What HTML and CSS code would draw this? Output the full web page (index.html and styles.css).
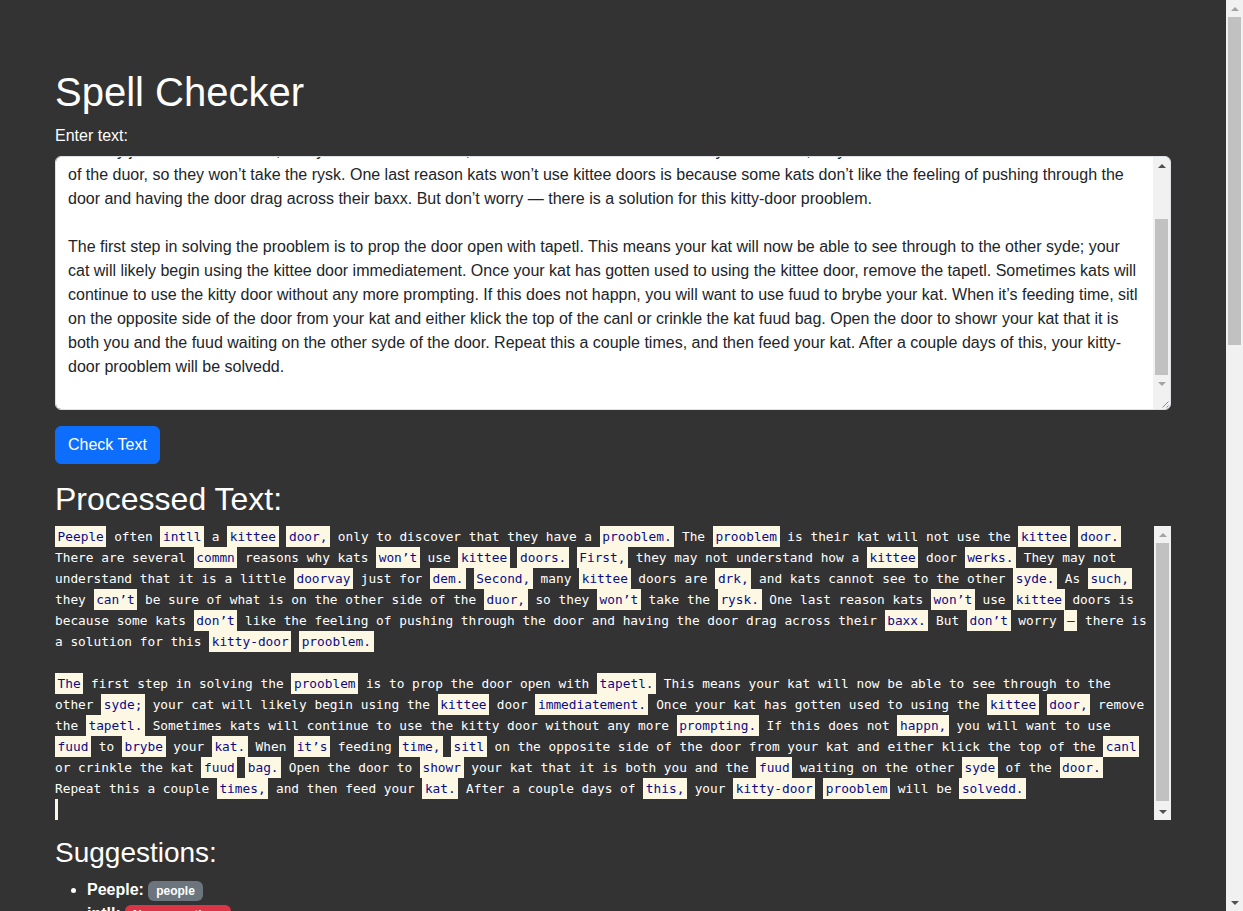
FILE: index.html
```html
<!DOCTYPE html>
<html lang="en">
<head>
<meta charset="utf-8">
<title>Spell Checker</title>
<link rel="stylesheet" href="styles.css">
<script src="script.js" defer></script>
</head>
<body>
<div class="container">
  <h1 class="title">Spell Checker</h1>
  <label class="form-label" for="inputText">Enter text:</label>
  <div class="ta-wrap">
    <textarea id="inputText" class="form-control" rows="10">
Peeple often intll a kittee door, only to discover that they have a prooblem. The prooblem is their kat will not use the kittee door. There are several commn reasons why kats won’t use kittee doors. First, they may not understand how a kittee door werks. They may not understand that it is a little doorvay just for dem. Second, many kittee doors are drk, and kats cannot see to the other syde. As such, they can’t be sure of what is on the other side of the duor, so they won’t take the rysk. One last reason kats won’t use kittee doors is because some kats don’t like the feeling of pushing through the door and having the door drag across their baxx. But don’t worry — there is a solution for this kitty-door prooblem.

The first step in solving the prooblem is to prop the door open with tapetl. This means your kat will now be able to see through to the other syde; your cat will likely begin using the kittee door immediatement. Once your kat has gotten used to using the kittee door, remove the tapetl. Sometimes kats will continue to use the kitty door without any more prompting. If this does not happn, you will want to use fuud to brybe your kat. When it’s feeding time, sitl on the opposite side of the door from your kat and either klick the top of the canl or crinkle the kat fuud bag. Open the door to showr your kat that it is both you and the fuud waiting on the other syde of the door. Repeat this a couple times, and then feed your kat. After a couple days of this, your kitty-door prooblem will be solvedd.
</textarea>
    <div class="sb sb-textarea" aria-hidden="true">
      <div class="sb-btn"><span class="arrow up"></span></div>
      <div class="sb-track"><div class="sb-thumb" style="margin-top:45px;height:156px"></div></div>
      <div class="sb-btn"><span class="arrow down off"></span></div>
      <div class="sb-corner">
        <svg width="17" height="17" viewBox="0 0 17 17"><path d="M15.5 9.5 L9.5 15.5 M15.5 13.5 L13.5 15.5" stroke="#8a8a8a" stroke-width="1" fill="none"/></svg>
      </div>
    </div>
  </div>
  <button class="btn btn-primary" type="button">Check Text</button>

  <h2 class="section-title">Processed Text:</h2>
  <div class="proc-wrap">
  <pre class="processed"><div class="processed-inner"><mark class="err">Peeple</mark> often <mark class="err">intll</mark> a <mark class="err">kittee</mark> <mark class="err">door,</mark> only to discover that they have a <mark class="err">prooblem.</mark> The <mark class="err">prooblem</mark> is their kat will not use the <mark class="err">kittee</mark> <mark class="err">door.</mark>
There are several <mark class="err">commn</mark> reasons why kats <mark class="err">won’t</mark> use <mark class="err">kittee</mark> <mark class="err">doors.</mark> <mark class="err">First,</mark> they may not understand how a <mark class="err">kittee</mark> door <mark class="err">werks.</mark> They may not
understand that it is a little <mark class="err">doorvay</mark> just for <mark class="err">dem.</mark> <mark class="err">Second,</mark> many <mark class="err">kittee</mark> doors are <mark class="err">drk,</mark> and kats cannot see to the other <mark class="err">syde.</mark> As <mark class="err">such,</mark>
they <mark class="err">can’t</mark> be sure of what is on the other side of the <mark class="err">duor,</mark> so they <mark class="err">won’t</mark> take the <mark class="err">rysk.</mark> One last reason kats <mark class="err">won’t</mark> use <mark class="err">kittee</mark> doors is
because some kats <mark class="err">don’t</mark> like the feeling of pushing through the door and having the door drag across their <mark class="err">baxx.</mark> But <mark class="err">don’t</mark> worry <mark class="err">–</mark> there is
a solution for this <mark class="err">kitty-door</mark> <mark class="err">prooblem.</mark>

<mark class="err">The</mark> first step in solving the <mark class="err">prooblem</mark> is to prop the door open with <mark class="err">tapetl.</mark> This means your kat will now be able to see through to the
other <mark class="err">syde;</mark> your cat will likely begin using the <mark class="err">kittee</mark> door <mark class="err">immediatement.</mark> Once your kat has gotten used to using the <mark class="err">kittee</mark> <mark class="err">door,</mark> remove
the <mark class="err">tapetl.</mark> Sometimes kats will continue to use the kitty door without any more <mark class="err">prompting.</mark> If this does not <mark class="err">happn,</mark> you will want to use
<mark class="err">fuud</mark> to <mark class="err">brybe</mark> your <mark class="err">kat.</mark> When <mark class="err">it’s</mark> feeding <mark class="err">time,</mark> <mark class="err">sitl</mark> on the opposite side of the door from your kat and either klick the top of the <mark class="err">canl</mark>
or crinkle the kat <mark class="err">fuud</mark> <mark class="err">bag.</mark> Open the door to <mark class="err">showr</mark> your kat that it is both you and the <mark class="err">fuud</mark> waiting on the other <mark class="err">syde</mark> of the <mark class="err">door.</mark>
Repeat this a couple <mark class="err">times,</mark> and then feed your <mark class="err">kat.</mark> After a couple days of <mark class="err">this,</mark> your <mark class="err">kitty-door</mark> <mark class="err">prooblem</mark> will be <mark class="err">solvedd.</mark>
<mark class="err caret"></mark></div></pre>
    <div class="sb sb-processed" aria-hidden="true">
      <div class="sb-btn"><span class="arrow up off"></span></div>
      <div class="sb-track"><div class="sb-thumb" style="margin-top:0;height:258px"></div></div>
      <div class="sb-btn"><span class="arrow down"></span></div>
    </div>
  </div>

  <h3 class="section-subtitle">Suggestions:</h3>
  <ul class="suggestions">
    <li><strong>Peeple:</strong> <span class="badge bg-secondary">people</span></li>
    <li><strong>intll:</strong> <span class="badge bg-danger">No suggestions</span></li>
    <li><strong>kittee:</strong> <span class="badge bg-secondary">kitten</span></li>
    <li><strong>door,:</strong> <span class="badge bg-secondary">door</span></li>
    <li><strong>prooblem.:</strong> <span class="badge bg-secondary">problem</span></li>
    <li><strong>prooblem:</strong> <span class="badge bg-secondary">problem</span></li>
    <li><strong>kittee:</strong> <span class="badge bg-secondary">kitten</span></li>
    <li><strong>door.:</strong> <span class="badge bg-secondary">door</span></li>
    <li><strong>commn:</strong> <span class="badge bg-secondary">common</span></li>
    <li><strong>won’t:</strong> <span class="badge bg-danger">No suggestions</span></li>
    <li><strong>kittee:</strong> <span class="badge bg-secondary">kitten</span></li>
    <li><strong>doors.:</strong> <span class="badge bg-secondary">doors</span></li>
    <li><strong>First,:</strong> <span class="badge bg-secondary">first</span></li>
    <li><strong>kittee:</strong> <span class="badge bg-secondary">kitten</span></li>
    <li><strong>werks.:</strong> <span class="badge bg-secondary">works</span></li>
    <li><strong>doorvay:</strong> <span class="badge bg-secondary">doorway</span></li>
    <li><strong>dem.:</strong> <span class="badge bg-secondary">den</span></li>
    <li><strong>Second,:</strong> <span class="badge bg-secondary">second</span></li>
    <li><strong>kittee:</strong> <span class="badge bg-secondary">kitten</span></li>
    <li><strong>drk,:</strong> <span class="badge bg-secondary">dark</span></li>
    <li><strong>syde.:</strong> <span class="badge bg-secondary">side</span></li>
    <li><strong>such,:</strong> <span class="badge bg-secondary">such</span></li>
    <li><strong>can’t:</strong> <span class="badge bg-danger">No suggestions</span></li>
    <li><strong>duor,:</strong> <span class="badge bg-secondary">dour</span></li>
    <li><strong>won’t:</strong> <span class="badge bg-danger">No suggestions</span></li>
    <li><strong>rysk.:</strong> <span class="badge bg-secondary">risk</span></li>
    <li><strong>won’t:</strong> <span class="badge bg-danger">No suggestions</span></li>
    <li><strong>kittee:</strong> <span class="badge bg-secondary">kitten</span></li>
    <li><strong>don’t:</strong> <span class="badge bg-danger">No suggestions</span></li>
    <li><strong>baxx.:</strong> <span class="badge bg-danger">No suggestions</span></li>
    <li><strong>don’t:</strong> <span class="badge bg-danger">No suggestions</span></li>
    <li><strong>—:</strong> <span class="badge bg-danger">No suggestions</span></li>
    <li><strong>kitty-door:</strong> <span class="badge bg-danger">No suggestions</span></li>
    <li><strong>prooblem.:</strong> <span class="badge bg-secondary">problem</span></li>
    <li><strong>The:</strong> <span class="badge bg-secondary">the</span></li>
    <li><strong>prooblem:</strong> <span class="badge bg-secondary">problem</span></li>
    <li><strong>tapetl.:</strong> <span class="badge bg-danger">No suggestions</span></li>
    <li><strong>syde;:</strong> <span class="badge bg-secondary">side</span></li>
    <li><strong>kittee:</strong> <span class="badge bg-secondary">kitten</span></li>
    <li><strong>immediatement.:</strong> <span class="badge bg-danger">No suggestions</span></li>
    <li><strong>kittee:</strong> <span class="badge bg-secondary">kitten</span></li>
    <li><strong>door,:</strong> <span class="badge bg-secondary">door</span></li>
    <li><strong>tapetl.:</strong> <span class="badge bg-danger">No suggestions</span></li>
    <li><strong>prompting.:</strong> <span class="badge bg-secondary">prompting</span></li>
    <li><strong>happn,:</strong> <span class="badge bg-secondary">happen</span></li>
    <li><strong>fuud:</strong> <span class="badge bg-secondary">feud</span></li>
    <li><strong>brybe:</strong> <span class="badge bg-secondary">bribe</span></li>
    <li><strong>kat.:</strong> <span class="badge bg-secondary">kat</span></li>
    <li><strong>it’s:</strong> <span class="badge bg-danger">No suggestions</span></li>
    <li><strong>time,:</strong> <span class="badge bg-secondary">time</span></li>
    <li><strong>sitl:</strong> <span class="badge bg-secondary">sit</span></li>
    <li><strong>canl:</strong> <span class="badge bg-secondary">can</span></li>
    <li><strong>fuud:</strong> <span class="badge bg-secondary">feud</span></li>
    <li><strong>bag.:</strong> <span class="badge bg-secondary">bag</span></li>
    <li><strong>showr:</strong> <span class="badge bg-secondary">show</span></li>
    <li><strong>fuud:</strong> <span class="badge bg-secondary">feud</span></li>
    <li><strong>syde:</strong> <span class="badge bg-secondary">side</span></li>
    <li><strong>door.:</strong> <span class="badge bg-secondary">door</span></li>
    <li><strong>times,:</strong> <span class="badge bg-secondary">times</span></li>
    <li><strong>kat.:</strong> <span class="badge bg-secondary">kat</span></li>
    <li><strong>this,:</strong> <span class="badge bg-secondary">this</span></li>
    <li><strong>kitty-door:</strong> <span class="badge bg-danger">No suggestions</span></li>
    <li><strong>prooblem:</strong> <span class="badge bg-secondary">problem</span></li>
    <li><strong>solvedd.:</strong> <span class="badge bg-secondary">solved</span></li>
  </ul>
</div>

<div class="sb sb-page" aria-hidden="true">
  <div class="sb-btn"><span class="arrow up off"></span></div>
  <div class="sb-track"><div class="sb-thumb" style="margin-top:0;height:328px"></div></div>
  <div class="sb-btn"><span class="arrow down"></span></div>
</div>
</body>
</html>
```

FILE: styles.css
```css
*,
*::before,
*::after {
  box-sizing: border-box;
}

html,
body {
  margin: 0;
}

body {
  margin-right: 17px;
  background: #333333;
  color: #ffffff;
  font-family: "Liberation Sans", Arial, sans-serif;
  font-size: 16px;
  line-height: 1.5;
}

.container {
  max-width: 1140px;
  margin: 0 auto;
  padding: 68px 12px 0;
}

.title {
  font-size: 40px;
  font-weight: 400;
  line-height: 1.2;
  margin: 0 0 8px;
}

.form-label {
  display: inline-block;
  margin-bottom: 8px;
}

.ta-wrap {
  position: relative;
}

.form-control {
  display: block;
  width: 100%;
  height: 254px;
  margin: 0;
  padding: 6px 29px 6px 12px;
  font-family: "Liberation Sans", Arial, sans-serif;
  font-size: 16px;
  line-height: 1.5;
  color: #212529;
  background: #ffffff;
  border: 1px solid #dee2e6;
  border-radius: 6px;
  resize: none;
  outline: none;
  overflow-y: auto;
  scrollbar-width: none;
}

.btn {
  display: inline-block;
  margin-top: 16px;
  padding: 6px 12px;
  font-family: "Liberation Sans", Arial, sans-serif;
  font-size: 16px;
  line-height: 1.5;
  color: #ffffff;
  background: #0d6efd;
  border: 1px solid #0d6efd;
  border-radius: 6px;
  cursor: pointer;
}

.section-title {
  font-size: 32px;
  font-weight: 400;
  line-height: 1.2;
  margin: 16px 0 8px;
}

.proc-wrap {
  position: relative;
  margin-bottom: 16px;
}

.processed {
  display: block;
  height: 294px;
  margin: 0;
  padding-right: 17px;
  overflow: hidden;
  font-family: "DejaVu Sans Mono", "Liberation Mono", monospace;
  font-size: 12.8px;
  line-height: 21px;
  white-space: pre;
  color: #ffffff;
}

.processed-inner {
  padding-bottom: 3px;
}

.err {
  background: #fcf8e3;
  color: #0b0b8a;
  padding: 3px 2.6px;
}

.caret {
  padding: 3px 1.4px;
}

.section-subtitle {
  font-size: 28px;
  font-weight: 400;
  line-height: 1.2;
  margin: 0 0 8px;
}

.suggestions {
  margin: 0 0 16px;
  padding-left: 32px;
}

.suggestions strong {
  font-weight: 700;
}

.badge {
  display: inline-block;
  padding: 4.2px 7.8px;
  font-size: 12px;
  font-weight: 700;
  line-height: 1;
  color: #ffffff;
  border-radius: 6px;
  vertical-align: baseline;
  white-space: nowrap;
}

.bg-secondary {
  background: #6c757d;
}

.bg-danger {
  background: #dc3545;
}

/* Classic scrollbars drawn as overlays */
.sb {
  display: flex;
  flex-direction: column;
  width: 17px;
  background: #f1f1f1;
}

.sb-btn {
  flex: 0 0 17px;
  display: flex;
  align-items: center;
  justify-content: center;
}

.sb-track {
  flex: 1 1 auto;
  padding: 0 2px;
  overflow: hidden;
}

.sb-thumb {
  width: 100%;
  background: #c1c1c1;
}

.arrow {
  display: block;
  width: 0;
  height: 0;
  border-left: 4px solid transparent;
  border-right: 4px solid transparent;
}

.arrow.up {
  border-bottom: 4px solid #505050;
}

.arrow.down {
  border-top: 4px solid #505050;
}

.arrow.up.off {
  border-bottom-color: #a3a3a3;
}

.arrow.down.off {
  border-top-color: #a3a3a3;
}

.sb-corner {
  flex: 0 0 17px;
  background: #f1f1f1;
}

.sb-corner svg {
  display: block;
}

.sb-textarea {
  position: absolute;
  top: 1px;
  right: 1px;
  bottom: 1px;
  border-radius: 0 5px 5px 0;
  overflow: hidden;
}

.sb-processed {
  position: absolute;
  top: 0;
  right: 0;
  bottom: 0;
}

.sb-page {
  position: fixed;
  top: 0;
  right: 0;
  bottom: 0;
}
```

FILE: script.js
```js
document.addEventListener('DOMContentLoaded', function () {
  var area = document.getElementById('inputText');
  if (area) {
    area.scrollTop = area.scrollHeight;
  }
});
```
